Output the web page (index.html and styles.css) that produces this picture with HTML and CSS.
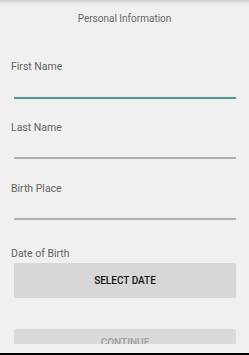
FILE: index.html
```html
<!DOCTYPE html>
<html>
<head>
<meta charset="utf-8">
<link rel="stylesheet" href="styles.css">
</head>
<body>
<div class="screen">
  <div class="topshadow"></div>
  <div class="title">Personal Information</div>
  <div class="form">
    <div class="field first">
      <div class="label">First Name</div>
      <div class="line focused"></div>
    </div>
    <div class="field">
      <div class="label">Last Name</div>
      <div class="line"></div>
    </div>
    <div class="field">
      <div class="label">Birth Place</div>
      <div class="line"></div>
    </div>
    <div class="date">
      <div class="label">Date of Birth</div>
      <div class="button">SELECT DATE</div>
    </div>
    <div class="clip">
      <div class="button faded">CONTINUE</div>
    </div>
  </div>
  <div class="spacer"></div>
  <div class="navedge"></div>
</div>
</body>
</html>
```

FILE: styles.css
```css
html, body {
  margin: 0;
  padding: 0;
  background: #f0f0f0;
  overflow: hidden;
}
.screen {
  width: 249px;
  height: 355px;
  overflow: hidden;
  display: flex;
  flex-direction: column;
  background: #f0f0f0;
  font-family: Roboto, "Liberation Sans", sans-serif;
}
.topshadow {
  height: 6px;
  flex: none;
  background: linear-gradient(#c9c9c9, #e6e6e6 45%, #f0f0f0);
}
.title {
  margin-top: 7px;
  height: 12px;
  line-height: 12px;
  font-size: 10px;
  color: #686868;
  text-align: center;
}
.form {
  display: flex;
  flex-direction: column;
  padding: 0 13px 0 14px;
  margin-top: 35px;
}
.label {
  margin-left: -3px;
  height: 13px;
  line-height: 13px;
  font-size: 10.5px;
  color: #636363;
}
.field {
  display: flex;
  flex-direction: column;
  height: 61px;
}
.line {
  margin-top: 23px;
  height: 2px;
  background: #b0b0b0;
}
.field.first .line {
  margin-top: 24px;
}
.line.focused {
  background: #52968e;
  box-shadow: 0 2px 0 #e2f1ee;
}
.date {
  display: flex;
  flex-direction: column;
  gap: 3px;
  margin-top: 4px;
}
.button {
  height: 34px;
  display: flex;
  align-items: center;
  justify-content: center;
  background: #d6d7d6;
  border-radius: 2px;
  box-shadow: 0 1px 1px rgba(0, 0, 0, 0.12);
  font-size: 10px;
  font-weight: 500;
  color: #151515;
}
.clip {
  margin-top: 32px;
  height: 15px;
  overflow: hidden;
}
.button.faded {
  background: #dadada;
  color: #a0a0a0;
  align-items: flex-start;
  padding-top: 8px;
  box-sizing: border-box;
  box-shadow: none;
}
.spacer {
  flex: 1;
}
.navedge {
  height: 2px;
  flex: none;
  background: #000000;
}
```
